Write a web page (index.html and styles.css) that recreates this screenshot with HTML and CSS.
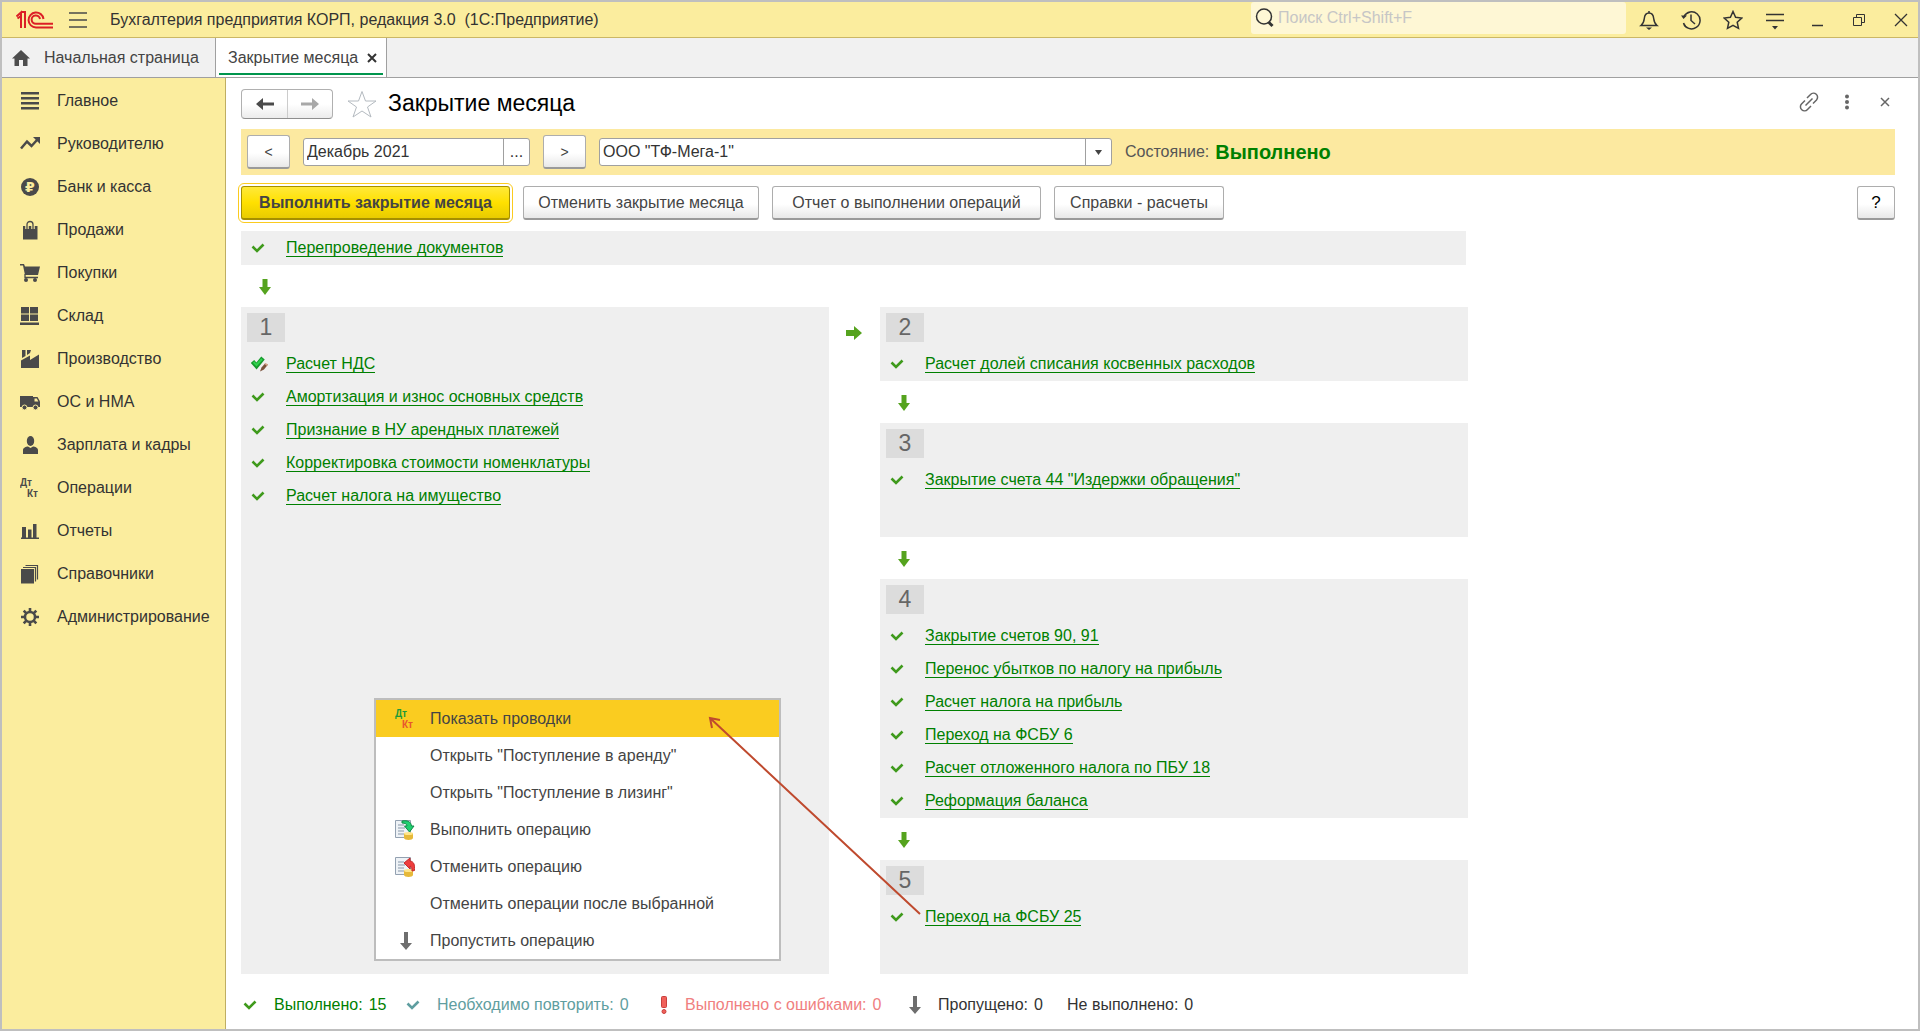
FILE: index.html
```html
<!DOCTYPE html>
<html lang="ru">
<head>
    <meta charset="utf-8">
    <title>Закрытие месяца</title>
    <link rel="stylesheet" href="styles.css">
</head>
<body>
    <!-- shared icons -->
    <svg class="sprite">
        <symbol id="check" viewBox="0 0 14 12"><path d="M1.500 4.500l4.500 4.500L12.500 2.500" fill="none" stroke="currentColor" stroke-width="2.600"/></symbol>
        <symbol id="down" viewBox="0 0 14 16"><path d="M4.500 0h5v8H13l-6 8-6-8h3.500z" fill="#55a31e"/></symbol>
        <symbol id="skip" viewBox="0 0 12 18"><path d="M4 0h4v11h4l-6 7-6-7h4z" fill="#6e6e6e"/></symbol>
    </svg>

    <div class="window">
        <header class="topbar">
            <svg class="logo" width="38" height="20" viewBox="0 0 38 20" fill="none" stroke="#dc1f26" stroke-width="2">
                <path d="M0.500 6.500L5 2.500V18M1.500 8.500L5 6M5 2H9V18"/>
                <path d="M27.500 9A7.500 7.500 0 1 0 20 17.500H37"/>
                <path d="M24 9A4.200 4.200 0 1 0 20 13.800H37"/>
            </svg>
            <button class="icon-btn" aria-label="Меню">
                <svg width="18" height="18" stroke="#4a4a4a" stroke-width="1.500"><path d="M0 2h18M0 9h18M0 16h18"/></svg>
            </button>
            <div class="app-title">Бухгалтерия предприятия КОРП, редакция 3.0&nbsp; (1С:Предприятие)</div>
            <div class="search">
                <svg width="20" height="20" fill="none" stroke="#333"><circle cx="9" cy="8.500" r="7.500" stroke-width="1.500"/><path d="M13.500 14l4 4" stroke-width="3"/></svg>
                <input type="text" placeholder="Поиск Ctrl+Shift+F" aria-label="Поиск">
            </div>
            <div class="tools">
                <button class="icon-btn" aria-label="Уведомления">
                    <svg width="20" height="20" fill="none" stroke="#333" stroke-width="1.500"><path d="M10 1v2M2 15.500c2.500-2 3-4 3.300-7C5.600 5 7.500 3 10 3s4.400 2 4.700 5.500c.3 3 .8 5 3.300 7z"/><path d="M7 17.500h6l-3 2.500z" fill="#333" stroke="none"/></svg>
                </button>
                <button class="icon-btn" aria-label="История">
                    <svg width="20" height="20" fill="none" stroke="#333" stroke-width="1.500"><path d="M3 6.500A8.500 8.500 0 1 1 2.500 13"/><path d="M10 4.500v6l4 3.500"/><path d="M0 5.500h6l-3.500 3.500z" fill="#333" stroke="none"/><path d="M3 14.500a8.500 8.500 0 0 0 2 2.500"/></svg>
                </button>
                <button class="icon-btn" aria-label="Избранное">
                    <svg width="20" height="20" fill="none" stroke="#333" stroke-width="1.500"><path d="M10 1.500l2.600 5.800 6.200.7-4.600 4.200 1.300 6.200L10 15.300l-5.500 3.100 1.300-6.200L1.200 8l6.200-.7z"/></svg>
                </button>
                <button class="icon-btn" aria-label="Настройки">
                    <svg width="20" height="20" fill="none" stroke="#333" stroke-width="1.500"><path d="M1 4.500h18M1 10.500h18"/><path d="M7 16h6l-3 3.500z" fill="#333" stroke="none"/></svg>
                </button>
                <button class="icon-btn" aria-label="Свернуть">
                    <svg width="20" height="20" stroke="#333" stroke-width="1.500"><path d="M5 15.500h11"/></svg>
                </button>
                <button class="icon-btn" aria-label="Развернуть">
                    <svg width="20" height="20" fill="none" stroke="#333"><path d="M4.500 7.500h8v8h-8zM7.500 7.500v-3h8v8h-3"/></svg>
                </button>
                <button class="icon-btn" aria-label="Закрыть">
                    <svg width="20" height="20" stroke="#333" stroke-width="1.300"><path d="M4 4l12 12M16 4L4 16"/></svg>
                </button>
            </div>
        </header>

        <nav class="tabs">
            <a href="#" class="tab home">
                <svg width="18" height="16" fill="#4d4d4d"><path d="M9 0l9 8.500h-2.500V16h-4.500v-6H7v6H2.500V8.500H0z"/></svg>
                Начальная страница
            </a>
            <div class="tab active">
                <a href="#">Закрытие месяца</a>
                <button class="tab-close" aria-label="Закрыть вкладку">
                    <svg width="10" height="10" stroke="#333" stroke-width="2"><path d="M1 1l8 8M9 1L1 9"/></svg>
                </button>
            </div>
        </nav>

        <div class="body">
            <nav class="sidebar">
                <a href="#"><svg viewBox="0 0 20 20"><path d="M1 1h18v2.500H1zM1 6h18v2.500H1zM1 11h18v2.500H1zM1 16h18v2.500H1z"/></svg>Главное</a>
                <a href="#"><svg viewBox="0 0 20 20"><path d="M1 14.500l6-7 4.500 4.500L17 6" fill="none" stroke="#4a4a4a" stroke-width="2.500"/><path d="M13 3h7v7z"/></svg>Руководителю</a>
                <a href="#"><svg viewBox="0 0 20 20"><circle cx="10" cy="10" r="9"/><text x="5" y="15" class="rub">₽</text></svg>Банк и касса</a>
                <a href="#"><svg viewBox="0 0 20 20"><path d="M3 6h14.500v13.500H3z"/><path d="M7 9V4.500C7 .500 13 .500 13 4.500V9" fill="none" stroke="#fbed9e" stroke-width="3.500"/><path d="M7 9V4.500C7 .500 13 .500 13 4.500V9" fill="none" stroke="#4a4a4a" stroke-width="1.300"/></svg>Продажи</a>
                <a href="#"><svg viewBox="0 0 20 20"><path d="M0 1h4l1 2.500h15L18 12H5L3 2.500H0z"/><path d="M5 11v3.500h13" fill="none" stroke="#4a4a4a" stroke-width="1.300"/><circle cx="6" cy="17" r="2"/><circle cx="15" cy="17" r="2"/></svg>Покупки</a>
                <a href="#"><svg viewBox="0 0 20 20"><path d="M1 1h8v6.500H1zM10 1h8v6.500h-8zM1 8.500h8V15H1zM10 8.500h8V15h-8zM0 16.500h19V19H0z"/></svg>Склад</a>
                <a href="#"><svg viewBox="0 0 20 20"><path d="M1 19v-7.500l9-5V11l9-5.500V19zM2 1h3.500v6L2 9zM7 1h4l-1 3-3 2z"/></svg>Производство</a>
                <a href="#"><svg viewBox="0 0 20 20"><path d="M0 4h13v11H0z"/><path d="M13 5h4.500L20 9.500V15h-7z"/><path d="M14.500 6.500h2.300l1.500 3h-3.800z" fill="#fbed9e"/><circle cx="4.500" cy="15.500" r="2.500" stroke="#fbed9e"/><circle cx="15.500" cy="15.500" r="2.500" stroke="#fbed9e"/></svg>ОС и НМА</a>
                <a href="#"><svg viewBox="0 0 20 20"><ellipse cx="10.500" cy="6" rx="3.700" ry="5"/><path d="M3 19v-4c0-2 3-3.500 5-3.500l2.500 1.500 2.500-1.500c2 0 5 1.500 5 3.500v4z"/></svg>Зарплата и кадры</a>
                <a href="#"><svg viewBox="0 0 20 20"><text x="0" y="8" class="dk">Дт</text><text x="7" y="19" class="dk">Кт</text></svg>Операции</a>
                <a href="#"><svg viewBox="0 0 20 20"><path d="M1 16.500h18V18H1zM2 6h4v11H2zM8 8.500h3.500V17H8zM13 3h3.500v14H13z"/></svg>Отчеты</a>
                <a href="#"><svg viewBox="0 0 20 20"><path d="M1 5h13v14.500H1z"/><path d="M3 3.500h12.500v14M5.500 1.500h12v14" fill="none" stroke="#4a4a4a" stroke-width="1.200"/></svg>Справочники</a>
                <a href="#"><svg viewBox="0 0 20 20"><circle cx="10" cy="10" r="5" fill="none" stroke="#4a4a4a" stroke-width="2.500"/><path d="M10 1v4M10 15v4M1 10h4M15 10h4M3.700 3.700l2.800 2.800M13.500 13.500l2.800 2.800M3.700 16.300l2.800-2.800M13.500 6.500l2.800-2.800" stroke="#4a4a4a" stroke-width="2.600"/></svg>Администрирование</a>
            </nav>

            <main>
                <div class="title-row">
                    <div class="history">
                        <button aria-label="Назад"><svg width="18" height="14" fill="#4a4a4a"><path d="M0 7l7-6v4.500h11v3H7V13z"/></svg></button>
                        <button aria-label="Вперед"><svg width="18" height="14" fill="#a8a8a8"><path d="M18 7l-7-6v4.500H0v3h11V13z"/></svg></button>
                    </div>
                    <svg class="star" width="30" height="28" fill="none" stroke="#b4bac0"><path d="M15 1.500l3.500 9.500h10.500l-8.500 6 3.500 10-9-6-9 6 3.500-10-8.500-6h10.500z"/></svg>
                    <h1>Закрытие месяца</h1>
                    <div class="title-tools">
                        <button class="icon-btn" aria-label="Ссылка">
                            <svg width="20" height="20" fill="none" stroke="#666" stroke-width="1.500"><path d="M8 6l3.500-3.500a3.500 3.500 0 0 1 6 5.500L14 11.500M12 14l-3.500 3.500a3.500 3.500 0 0 1-6-5.500L6 8.500M6.500 13.500l7-7"/></svg>
                        </button>
                        <button class="icon-btn" aria-label="Еще">
                            <svg width="6" height="16" fill="#666"><circle cx="3" cy="2.500" r="2"/><circle cx="3" cy="8" r="2"/><circle cx="3" cy="13.500" r="2"/></svg>
                        </button>
                        <button class="icon-btn" aria-label="Закрыть форму">
                            <svg width="10" height="10" stroke="#666" stroke-width="1.500"><path d="M1 1l8 8M9 1L1 9"/></svg>
                        </button>
                    </div>
                </div>

                <div class="period">
                    <button class="btn step">&lt;</button>
                    <div class="field month">
                        <input type="text" value="Декабрь 2021" aria-label="Период">
                        <button class="field-btn">...</button>
                    </div>
                    <button class="btn step">&gt;</button>
                    <div class="field org">
                        <select aria-label="Организация"><option>ООО "ТФ-Мега-1"</option></select>
                        <span class="field-btn"><svg width="8" height="5" fill="#444"><path d="M0 0h7l-3.500 5z"/></svg></span>
                    </div>
                    <span class="state">Состояние:</span>
                    <strong>Выполнено</strong>
                </div>

                <div class="commands">
                    <button class="btn primary">Выполнить закрытие месяца</button>
                    <button class="btn cancel">Отменить закрытие месяца</button>
                    <button class="btn report">Отчет о выполнении операций</button>
                    <button class="btn refs">Справки - расчеты</button>
                    <button class="btn help">?</button>
                </div>

                <div class="flow">
                    <div class="op strip"><svg class="check"><use href="#check"/></svg><a href="#">Перепроведение документов</a></div>
                    <div class="next"><svg><use href="#down"/></svg></div>

                    <div class="stages">
                        <section class="stage">
                            <h2>1</h2>
                            <div class="op">
                                <svg class="check-edit" viewBox="0 0 18 16"><path d="M1.500 5.500l4 4.500L12 2" fill="none" stroke="#159a2c" stroke-width="4.500"/><path d="M2.500 6l3 3L11 3" fill="none" stroke="#2fd04c" stroke-width="2"/><path d="M17 8.500l-4 5-4 2 1.500-4 3.500-4z" fill="#7b523c"/><path d="M17 8.500l-1 1.500-2.500-2 1-1z" fill="#d8a48c"/></svg>
                                <a href="#">Расчет НДС</a>
                            </div>
                            <div class="op"><svg class="check"><use href="#check"/></svg><a href="#">Амортизация и износ основных средств</a></div>
                            <div class="op"><svg class="check"><use href="#check"/></svg><a href="#">Признание в НУ арендных платежей</a></div>
                            <div class="op"><svg class="check"><use href="#check"/></svg><a href="#">Корректировка стоимости номенклатуры</a></div>
                            <div class="op"><svg class="check"><use href="#check"/></svg><a href="#">Расчет налога на имущество</a></div>
                        </section>

                        <div class="between">
                            <svg width="16" height="14"><path d="M0 4h8V0l8 7-8 7v-4H0z" fill="#55a31e"/></svg>
                        </div>

                        <div class="column">
                            <section class="stage">
                                <h2>2</h2>
                                <div class="op"><svg class="check"><use href="#check"/></svg><a href="#">Расчет долей списания косвенных расходов</a></div>
                            </section>
                            <div class="next"><svg><use href="#down"/></svg></div>
                            <section class="stage tall">
                                <h2>3</h2>
                                <div class="op"><svg class="check"><use href="#check"/></svg><a href="#">Закрытие счета 44 "Издержки обращения"</a></div>
                            </section>
                            <div class="next"><svg><use href="#down"/></svg></div>
                            <section class="stage">
                                <h2>4</h2>
                                <div class="op"><svg class="check"><use href="#check"/></svg><a href="#">Закрытие счетов 90, 91</a></div>
                                <div class="op"><svg class="check"><use href="#check"/></svg><a href="#">Перенос убытков по налогу на прибыль</a></div>
                                <div class="op"><svg class="check"><use href="#check"/></svg><a href="#">Расчет налога на прибыль</a></div>
                                <div class="op"><svg class="check"><use href="#check"/></svg><a href="#">Переход на ФСБУ 6</a></div>
                                <div class="op"><svg class="check"><use href="#check"/></svg><a href="#">Расчет отложенного налога по ПБУ 18</a></div>
                                <div class="op"><svg class="check"><use href="#check"/></svg><a href="#">Реформация баланса</a></div>
                            </section>
                            <div class="next"><svg><use href="#down"/></svg></div>
                            <section class="stage tall">
                                <h2>5</h2>
                                <div class="op"><svg class="check"><use href="#check"/></svg><a href="#">Переход на ФСБУ 25</a></div>
                            </section>
                        </div>
                    </div>

                    <!-- context menu of the selected operation -->
                    <div class="menu">
                        <button class="selected"><svg viewBox="0 0 20 20"><text x="0" y="8" class="dk debit">Дт</text><text x="7" y="19" class="dk credit">Кт</text></svg>Показать проводки</button>
                        <button><span></span>Открыть "Поступление в аренду"</button>
                        <button><span></span>Открыть "Поступление в лизинг"</button>
                        <button>
                            <svg viewBox="0 0 20 20"><path d="M.500.500h15v17H.500z" fill="#eef2f6" stroke="#93a1b1"/><path d="M3 5h6M3 8h7M3 11h6M3 14h6" stroke="#8797a8"/><path d="M9 13h9v5c0 2.500-9 2.500-9 0z" fill="#e6b93a"/><ellipse cx="13.500" cy="13.500" rx="4.500" ry="1.500" fill="#ffe58a"/><path d="M7 1c6-1 9 1 9.500 5H19l-4.500 6L9.500 6h2.500C12 4 10 3 7 3z" fill="#1fd070" stroke="#118a48"/></svg>
                            Выполнить операцию
                        </button>
                        <button>
                            <svg viewBox="0 0 20 20"><path d="M.500.500h15v17H.500z" fill="#eef2f6" stroke="#93a1b1"/><path d="M3 5h6M3 8h7M3 11h6M3 14h6" stroke="#8797a8"/><path d="M9 13h9v5c0 2.500-9 2.500-9 0z" fill="#e6b93a"/><ellipse cx="13.500" cy="13.500" rx="4.500" ry="1.500" fill="#ffe58a"/><path d="M9 6l6-5v3c4 .500 5 4 4.500 9.500L17 14c0-3-.500-4.500-2-5v3z" fill="#ee3d3d" stroke="#c42a2a"/></svg>
                            Отменить операцию
                        </button>
                        <button><span></span>Отменить операции после выбранной</button>
                        <button><svg viewBox="0 0 20 20"><use href="#skip" x="5" y="1" width="12" height="18"/></svg>Пропустить операцию</button>
                    </div>
                    <svg class="pointer" width="214" height="200" fill="none" stroke="#bf4a2e" stroke-width="2"><path d="M2 2l210 196M4 12L2 2l10 2"/></svg>
                </div>

                <footer class="legend">
                    <div class="item done"><svg class="check"><use href="#check"/></svg><span>Выполнено:</span><b>15</b></div>
                    <div class="item repeat"><svg class="check"><use href="#check"/></svg><span>Необходимо повторить:</span><b>0</b></div>
                    <div class="item errors"><svg width="8" height="18" fill="#f0605a" stroke="#c9403c"><rect x="1.500" y=".500" width="5" height="11" rx="1"/><circle cx="4" cy="15.500" r="2"/></svg><span>Выполнено с ошибками:</span><b>0</b></div>
                    <div class="item skipped"><svg width="12" height="18"><use href="#skip"/></svg><span>Пропущено:</span><b>0</b></div>
                    <div class="item todo"><span>Не выполнено:</span><b>0</b></div>
                </footer>
            </main>
        </div>
    </div>
</body>
</html>
```
FILE: styles.css
```css
* {
    box-sizing: border-box;
}
body {
    margin: 0;
    font-family: "Liberation Sans", Arial, sans-serif;
    font-size: 16px;
    line-height: 20px;
    color: #333;
    background-color: white;
}
button, input, select {
    font: inherit;
    color: inherit;
    padding: 0;
    margin: 0;
    border: none;
    background: none;
}
svg {
    display: block;
    flex: none;
}
.sprite {
    position: absolute;
    width: 0;
    height: 0;
}
.window {
    display: flex;
    flex-direction: column;
    min-height: 100vh;
    border: 2px solid #bfbfbf;
}

/* top bar */
.topbar {
    display: flex;
    align-items: center;
    height: 36px;
    padding-left: 14px;
    background-color: #fbed9e;
    border-bottom: 1px solid #cbb765;
}
.logo {
    margin-right: 15px;
}
.icon-btn {
    display: flex;
    align-items: center;
    justify-content: center;
}
.app-title {
    margin-left: 23px;
    flex: 1;
}
.search {
    display: flex;
    align-items: center;
    width: 375px;
    height: 32px;
    align-self: flex-start;
    padding-left: 4px;
    gap: 3px;
    background-color: #fef7d5;
    border-radius: 3px;
}
.search input {
    flex: 1;
    outline: none;
}
.search input::placeholder {
    color: #c6c6c6;
}
.tools {
    display: flex;
    gap: 8px;
    padding-left: 6px;
}
.tools .icon-btn {
    width: 34px;
    height: 32px;
}

/* open tabs */
.tabs {
    display: flex;
    height: 40px;
    background-color: #f1f1f1;
    border-bottom: 1px solid #a0a0a0;
}
.tabs a {
    color: #444;
    text-decoration: none;
}
.tab {
    display: flex;
    align-items: center;
}
.home {
    width: 213px;
    padding-left: 10px;
    gap: 14px;
}
.active {
    position: relative;
    width: 172px;
    padding-left: 12px;
    gap: 9px;
    background-color: white;
    border-left: 1px solid #a0a0a0;
    border-right: 1px solid #a0a0a0;
}
.active::after {
    content: "";
    position: absolute;
    left: 3px;
    right: 3px;
    bottom: 2px;
    height: 2px;
    background-color: #00954d;
}

.body {
    display: flex;
    flex: 1;
}

/* sections */
.sidebar {
    width: 224px;
    flex: none;
    padding-top: 1px;
    background-color: #fbed9e;
    border-right: 1px solid #bfae62;
}
.sidebar a {
    display: flex;
    align-items: center;
    height: 43px;
    padding-left: 18px;
    gap: 17px;
    color: #333;
    text-decoration: none;
}
.sidebar svg {
    width: 20px;
    height: 20px;
    fill: #4a4a4a;
}
.sidebar .rub {
    font: bold 14px "DejaVu Sans", sans-serif;
    fill: #fbed9e;
}
.dk {
    font: bold 10px "Liberation Sans", Arial, sans-serif;
}
.debit {
    fill: #1d9a3a;
}
.credit {
    fill: #e8562e;
}

main {
    flex: 1;
    padding: 10px 23px 0 15px;
}

.title-row {
    display: flex;
    align-items: center;
    height: 31px;
}
.history {
    display: flex;
    border: 1px solid #b0b0b0;
    border-bottom-color: #8f8f8f;
    border-radius: 4px;
    background: linear-gradient(white 50%, #ececec);
}
.history button {
    display: flex;
    align-items: center;
    justify-content: center;
    width: 45px;
    height: 28px;
}
.history button + button {
    border-left: 1px solid #ccc;
}
.star {
    margin: 0 11px 0 14px;
}
h1 {
    margin: 0;
    padding-bottom: 2px;
    flex: 1;
    font-size: 23px;
    font-weight: normal;
    line-height: 28px;
    color: black;
}
.title-tools {
    display: flex;
    gap: 18px;
    padding-bottom: 3px;
}
.title-tools .icon-btn {
    width: 20px;
}

/* period and organization */
.period {
    display: flex;
    align-items: center;
    height: 46px;
    margin-top: 10px;
    padding-left: 6px;
    background-color: #fce9a0;
}
.btn {
    height: 34px;
    color: #444;
    border: 1px solid #adadad;
    border-bottom: 2px solid #9a9a9a;
    border-radius: 3px;
    background: linear-gradient(white 55%, #e8e8e8);
}
.step {
    width: 43px;
    font-size: 14px;
}
.field {
    display: flex;
    height: 28px;
    margin: 0 13px;
    background-color: white;
    border: 1px solid #a0a0a0;
    border-radius: 3px;
}
.field input, .field select {
    flex: 1;
    min-width: 0;
    padding-left: 3px;
    appearance: none;
}
.field-btn {
    display: flex;
    align-items: center;
    justify-content: center;
    width: 26px;
    border-left: 1px solid #a0a0a0;
}
.month {
    width: 227px;
}
.org {
    width: 513px;
}
.state {
    color: #555;
}
.period strong {
    margin-left: 6px;
    font-size: 20px;
    color: #008000;
}

/* commands */
.commands {
    display: flex;
    margin: 11px 0;
}
.primary {
    width: 269px;
    font-weight: bold;
    border-color: #a58f00;
    background: linear-gradient(#ffe93a, #ffe000 50%, #e8cc00);
    outline: 1px solid #fbcb1f;
    outline-offset: 2px;
}
.cancel {
    width: 236px;
    margin-left: 13px;
}
.report {
    width: 269px;
    margin-left: 13px;
}
.refs {
    width: 170px;
    margin-left: 13px;
}
.help {
    width: 38px;
    margin-left: auto;
    font-size: 17px;
    color: black;
}

/* operations */
.flow {
    position: relative;
    max-width: 1227px;
}
.op {
    display: flex;
    align-items: center;
    height: 33px;
    padding-left: 10px;
}
.op a {
    line-height: 17px;
    color: #008000;
    text-decoration: none;
    border-bottom: 1px solid #008000;
}
.check {
    width: 14px;
    height: 12px;
    color: #3f9a1c;
}
.op .check {
    margin-right: 21px;
}
.check-edit {
    width: 18px;
    height: 16px;
    margin-right: 17px;
}
.strip {
    height: 34px;
    margin-right: 2px;
    background-color: #efefef;
}
.next {
    height: 42px;
    padding: 14px 0 0 17px;
}
.next svg {
    width: 14px;
    height: 16px;
}
.stages {
    display: grid;
    grid-template-columns: 1fr 51px 1fr;
}
.stage {
    padding: 6px 0 1px;
    background-color: #efefef;
}
.tall {
    height: 114px;
}
h2 {
    width: 38px;
    height: 29px;
    margin: 0 0 5px 6px;
    font-size: 23px;
    font-weight: normal;
    line-height: 28px;
    text-align: center;
    color: #666;
    background-color: #dcdcdc;
}
.between {
    padding: 19px 0 0 17px;
}

.menu {
    position: absolute;
    left: 133px;
    top: 467px;
    width: 407px;
    background-color: white;
    border: 2px solid #bdbdbd;
}
.menu button {
    display: flex;
    align-items: center;
    width: 100%;
    height: 37px;
    padding-left: 19px;
    gap: 15px;
    color: #444;
}
.menu .selected {
    background-color: #facc20;
}
.menu svg, .menu button span {
    width: 20px;
    height: 20px;
}
.pointer {
    position: absolute;
    left: 467px;
    top: 485px;
}

/* legend */
.legend {
    display: flex;
    padding: 21px 0 13px 2px;
}
.item {
    display: flex;
    align-items: center;
}
.item svg {
    margin-right: 17px;
}
.item b {
    margin-left: 6px;
    font-weight: normal;
}
.done {
    width: 163px;
    color: #008000;
}
.repeat, .repeat .check {
    color: #5f9ea0;
}
.repeat {
    width: 254px;
}
.errors {
    width: 249px;
    color: #f08080;
}
.skipped {
    width: 158px;
}
```
